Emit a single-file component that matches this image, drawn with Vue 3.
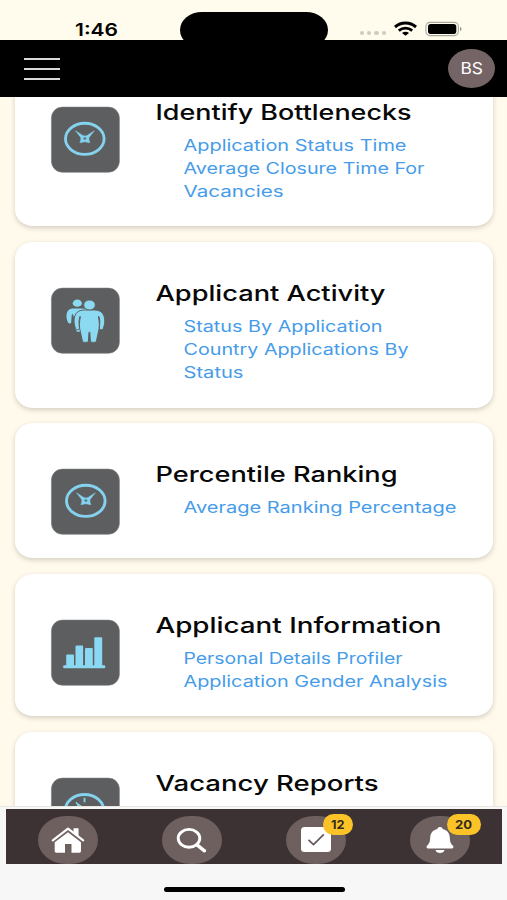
<script setup>
const cards = [
  { title: 'Identify Bottlenecks', w: 256, icon: 'clock', dx: -1, links: [['Application Status Time', 223], ['Average Closure Time For', 241], ['Vacancies', 100]] },
  { title: 'Applicant Activity', w: 230, icon: 'people', dx: 0, links: [['Status By Application', 199], ['Country Applications By', 225], ['Status', 60]] },
  { title: 'Percentile Ranking', w: 242, icon: 'clock', dx: 0, links: [['Average Ranking Percentage', 273]] },
  { title: 'Applicant Information', w: 286, icon: 'bars', dx: 0, links: [['Personal Details Profiler', 219], ['Application Gender Analysis', 264]] },
  { title: 'Vacancy Reports', w: 223, icon: 'gauge', dx: 0, links: [] },
]
</script>

<template>
  <div class="phone">
    <div class="status">
      <svg class="time" width="44" height="20"><text x="0" y="15.5" textLength="43" lengthAdjust="spacingAndGlyphs">1:46</text></svg>
      <div class="signals">
        <i class="dots"><b v-for="n in 4" :key="n"></b></i>
        <svg width="23" height="14" viewBox="0 0 23 14">
          <path d="M1 5C7-.2 16-.2 22 5" fill="none" stroke="#000" stroke-width="3" />
          <path d="M4.800 8.600c3.900-3.300 9.500-3.300 13.400 0" fill="none" stroke="#000" stroke-width="2.700" />
          <path d="M8 11c2-1.700 5-1.700 7 0L11.500 13.800z" />
        </svg>
        <svg width="38" height="14" viewBox="0 0 38 14">
          <rect x=".9" y=".4" width="32.500" height="13.200" rx="4" fill="none" stroke="#a9a79e" stroke-width="1.100" />
          <rect x="3" y="2" width="28.300" height="10" rx="2.800" />
          <path d="M35 5c2 .7 2 3.300 0 4z" fill="#8f8d86" />
        </svg>
      </div>
      <div class="island"></div>
    </div>

    <header>
      <div class="menu"><span></span><span></span><span></span></div>
      <div class="avatar"><svg width="24" height="16"><text x="0.500" y="14" textLength="22.500" lengthAdjust="spacingAndGlyphs">BS</text></svg></div>
    </header>

    <main>
      <section v-for="c in cards" :key="c.title" class="card">
        <svg class="tile" width="69" height="66" viewBox="0 0 69 66">
          <rect x=".4" y=".1" width="68" height="65.200" rx="11" fill="#5c5e5f" stroke="#7b7c7d" stroke-width=".6" />
          <g v-if="c.icon === 'clock'" :transform="`translate(${c.dx} 0)`" fill="none" stroke="#85d2ee">
            <ellipse cx="34.800" cy="31.800" rx="19.300" ry="15.600" stroke-width="2.900" />
            <path d="M25.500 23.800l6.800 4.400c1.600.9 3.600.9 5.200 0l6.800-4.400-5.200 6.600c-.5 1.200 0 3.300.8 5.300-2.400-.1-3.300-.9-5-.9s-2.600.8-5 .9c.8-2 1.300-4.100.8-5.300z" fill="#85d2ee" stroke="#85d2ee" stroke-width=".5" />
            <ellipse cx="34.900" cy="31.500" rx="1.500" ry="1.300" fill="#5c7b86" stroke="none" />
          </g>
          <g v-else-if="c.icon === 'people'" fill="#8cd9f2">
            <ellipse cx="26.300" cy="15.200" rx="4.600" ry="3.600" />
            <path d="M21.500 20.500h10c3 0 5 1 6 3l-6 20.300h-5.500c-1.600-2.500-2.300-5-2.500-8l-.5-6.500-1.500-3.500-.8 1.500-.5 7c-.2 1.700-2.500 1.600-3.200.2-1.200-2.400-1.700-5-1.500-7.700.4-4 2.500-6 6-6.300z" />
            <path d="M33.500 22h10c6.300 0 9.500 3.500 10.200 9 .3 3.300-.3 6.500-1.400 9.400-.9 2.100-4 1.600-3.900-.7l.4-6.700-.8-4.500-.6.200c1.200 5.300 1.400 10.600 0 15.300l-2 9.200c-.4 1.700-5.800 1.700-6 0l-.6-9h-.8l-.6 9c-.3 1.700-5.700 1.700-6 0l-2-9.200c-1.400-4.700-1.200-10 0-15.300l-.6-.2-.8 4.500.4 6.700c.1 2.300-3 2.800-3.900.7-1.100-2.900-1.700-6.100-1.400-9.400.7-5.500 3.900-9 10.400-9z" stroke="#5c5e5f" stroke-width="1" />
            <ellipse cx="38.500" cy="17" rx="5.800" ry="4.900" stroke="#5c5e5f" stroke-width=".8" />
          </g>
          <g v-else-if="c.icon === 'bars'" fill="#8bd8f2">
            <rect x="15.200" y="34.500" width="7.800" height="12" rx="1" /><rect x="24.500" y="25.500" width="7.600" height="21" rx="1" />
            <rect x="34" y="28" width="7.800" height="18" rx="1" /><rect x="43.300" y="17.200" width="7.900" height="29" rx="1" />
            <rect x="12.200" y="45.300" width="42" height="3" rx="1" />
          </g>
          <g v-else fill="none" stroke="#85d2ee">
            <ellipse cx="33.500" cy="32.500" rx="19.300" ry="16" stroke-width="2.800" />
            <path d="M33.500 19.800v4.500" stroke-width="1.800" />
            <path d="M25 24.300l9 6.500-6-1z" fill="#85d2ee" />
          </g>
        </svg>
        <div class="body">
          <svg class="title" :width="c.w" height="28"><text x="-.5" y="13" :textLength="c.w" lengthAdjust="spacingAndGlyphs">{{ c.title }}</text></svg>
          <svg v-for="l in c.links" :key="l[0]" class="link" :width="l[1]" height="23"><text x="-.5" y="16" :textLength="l[1]" lengthAdjust="spacingAndGlyphs">{{ l[0] }}</text></svg>
        </div>
      </section>
    </main>

    <footer>
      <nav>
        <div class="tab">
          <svg width="34" height="28" viewBox="0 0 34 28" fill="#fff">
            <path d="M1.800 14.300L17 2.600l15.200 11.700" fill="none" stroke="#fff" stroke-width="2.200" stroke-linecap="round" stroke-linejoin="round" />
            <path d="M22.500 2.300h5v8l-5-4zM17 6.200l13 10V25c0 1.200-.6 1.700-1.700 1.700H20.500V18h-6.500v8.700H5.500c-1.200 0-1.800-.5-1.800-1.700v-8.800z" />
          </svg>
        </div>
        <div class="tab">
          <svg width="32" height="26" viewBox="0 0 32 26" fill="none" stroke="#fff">
            <ellipse cx="13" cy="11.300" rx="10.800" ry="8.900" stroke-width="2.900" /><path d="M21 17.800l7.500 6" stroke-width="3.400" stroke-linecap="round" />
          </svg>
        </div>
        <div class="tab">
          <svg width="30" height="25" viewBox="0 0 30 25">
            <rect width="30" height="25" rx="3.500" fill="#fff" /><path d="M7.500 12.800l5 4.700L22.800 7.300" fill="none" stroke="#675657" stroke-width="1.700" />
          </svg>
          <span class="badge"><svg width="14" height="12"><text x="0" y="10" textLength="13.500" lengthAdjust="spacingAndGlyphs">12</text></svg></span>
        </div>
        <div class="tab">
          <svg width="28" height="28" viewBox="0 0 28 28" fill="#fff">
            <path d="M14 1c1.600 0 2.500.8 2.600 2 4.700 1.100 7 4.300 7.200 8.500.2 4.300.9 6.200 3.200 8.200 1 1.100.4 2.700-1.200 2.700H2.200c-1.600 0-2.200-1.600-1.200-2.700 2.300-2 3-3.900 3.200-8.200C4.400 7.300 6.700 4.100 11.400 3c.1-1.200 1-2 2.600-2zM9.500 24h9c-.5 4-8.500 4-9 0z" />
          </svg>
          <span class="badge wide"><svg width="18" height="12"><text x="0" y="10" textLength="17" lengthAdjust="spacingAndGlyphs">20</text></svg></span>
        </div>
      </nav>
      <div class="home"></div>
    </footer>
  </div>
</template>

<style>
body { margin: 0; background: #fffaed; }
</style>

<style scoped>
.phone { width: 507px; height: 900px; display: flex; flex-direction: column; overflow: hidden; background: #fffaec; font-family: Inter, "Liberation Sans", sans-serif; }
svg { display: block; overflow: visible; flex: none; }
.status { position: relative; height: 39.500px; flex: none; box-sizing: border-box; padding: 20px 44px 0 75px; display: flex; justify-content: space-between; align-items: flex-start; background: #fffcee; }
.time { font-size: 17.500px; font-weight: 600; }
.signals { display: flex; align-items: center; margin-top: 1.500px; }
.signals svg:first-of-type { margin: 0 8px 0 8px; }
.dots { display: flex; gap: 3.200px; margin-top: 9px; }
.dots b { width: 4.200px; height: 4px; border-radius: 50%; background: #cfcbbf; }
.island { position: absolute; left: 180px; top: 12px; width: 148px; height: 36px; border-radius: 22px / 18px; background: #000; }
header { height: 57.500px; flex: none; box-sizing: border-box; padding: 0 12px 0 24px; background: #000; display: flex; align-items: center; justify-content: space-between; }
.menu { display: flex; flex-direction: column; gap: 8px; width: 36px; padding-top: 1px; }
.menu span { height: 2px; background: #dadada; }
.avatar { width: 47px; height: 39px; border-radius: 50%; background: #746465; display: flex; align-items: center; justify-content: center; }
.avatar text { fill: #fff; font-size: 15.500px; }
main { height: 709px; flex: none; overflow: hidden; display: flex; flex-direction: column; gap: 15.900px; padding: 0 14px 0 15px; box-sizing: border-box; }
.card { flex: none; min-height: 119.500px; box-sizing: border-box; display: flex; align-items: flex-start; padding: 46px 0 22.500px 36px; border-radius: 18px / 16px; background: #fff; box-shadow: 0 2px 5px rgba(70, 70, 50, .24); }
.card:first-child { margin-top: -36.400px; }
.tile { margin-right: 36px; }
.body { display: flex; flex-direction: column; }
.title { font-size: 21.300px; font-weight: 500; fill: #080808; }
.link { margin-left: 28px; font-size: 15.600px; fill: #469ce9; }
footer { flex: 1; box-sizing: border-box; border-top: 1px solid #e8e6e1; padding: 2.400px 5px 0 6px; background: #f7f7f7; display: flex; flex-direction: column; align-items: center; }
nav { align-self: stretch; height: 54.600px; background: #3d3233; display: flex; justify-content: space-between; align-items: flex-end; padding: 0 32px; box-sizing: border-box; }
.tab { position: relative; width: 59.500px; height: 48px; border-radius: 28px / 24px; background: #6f6060; display: flex; align-items: center; justify-content: center; }
.badge { position: absolute; left: 37px; top: -2px; width: 30px; height: 21.500px; border-radius: 11px; background: #fcc328; display: flex; align-items: center; justify-content: center; font-size: 11.500px; font-weight: 700; fill: #332b20; }
.wide { width: 34px; }
.home { margin-top: 23px; width: 181px; height: 5px; border-radius: 3px; background: #000; }
</style>
